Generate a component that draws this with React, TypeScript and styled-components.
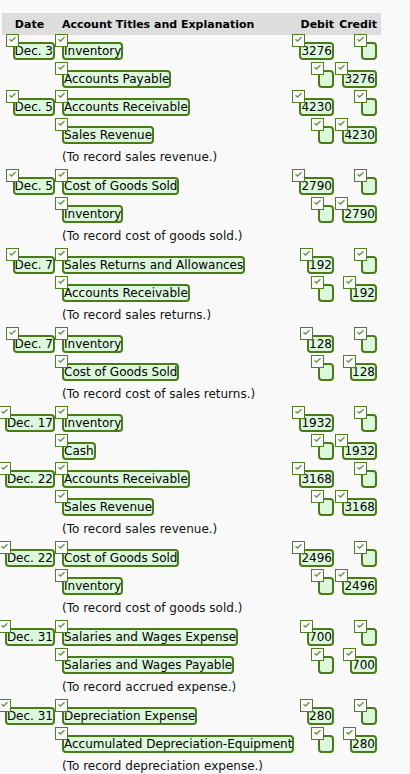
import React from "react";
import styled, { createGlobalStyle } from "styled-components";

const GlobalStyle = createGlobalStyle`
  body {
    margin: 0;
    background: #f9f9f9;
    font-family: "DejaVu Sans", Verdana, sans-serif;
    font-size: 12px;
    color: #000;
  }
`;

const Page = styled.div`
  padding: 13px 0 0 2px;
`;

const Table = styled.table`
  width: 379px;
  border-collapse: collapse;
  border-spacing: 0;
  table-layout: fixed;
`;

const Col = styled.col<{ $width: number }>`
  width: ${(p) => p.$width}px;
`;

const HeadCell = styled.th<{ $align: "left" | "center" | "right" }>`
  box-sizing: border-box;
  height: 22px;
  padding: 0 ${(p) => (p.$align === "right" ? "4px" : "0")} 0
    ${(p) => (p.$align === "left" ? "5px" : "0")};
  background: #dddddd;
  font-weight: bold;
  font-size: 11px;
  text-align: ${(p) => p.$align};
  white-space: nowrap;
`;

const EntryRow = styled.tr`
  height: 28px;
`;

const MemoRow = styled.tr`
  height: 23px;
`;

const Cell = styled.td<{ $align: "left" | "right" }>`
  box-sizing: border-box;
  padding: 7px ${(p) => (p.$align === "right" ? "4px" : "0")} 0
    ${(p) => (p.$align === "left" ? "5px" : "0")};
  vertical-align: top;
  text-align: ${(p) => p.$align};
  white-space: nowrap;
`;

const DateCell = styled(Cell)`
  padding-right: 2px;
`;

const MemoCell = styled.td`
  box-sizing: border-box;
  padding: 3px 0 0 5px;
  vertical-align: top;
  line-height: 15px;
  color: #111;
  white-space: nowrap;
`;

const Field = styled.span`
  position: relative;
  display: inline-block;
  min-width: 12px;
  height: 14px;
  line-height: 14px;
  border: 2px solid #4b7b16;
  border-radius: 4px;
  background: #dcf8dc;
  text-align: left;
  vertical-align: top;
`;

const Check = styled.span`
  position: absolute;
  left: -9px;
  top: -10px;
  width: 11px;
  height: 11px;
  border: 1px solid #4f7f1f;
  background: #fbfbfb;
  z-index: 1;
  svg {
    display: block;
  }
`;

function Answer({ value }: { value?: string }) {
  return (
    <Field>
      <Check>
        <svg width="11" height="11" viewBox="0 0 11 11">
          <polyline
            points="2.5,4.2 4.5,6 8.5,2.2"
            fill="none"
            stroke="#6b8f52"
            strokeWidth="1.3"
          />
        </svg>
      </Check>
      {value}
    </Field>
  );
}

interface Entry {
  date: string;
  lines: [string, string, string][];
  memo?: string;
}

const entries: Entry[] = [
  {
    date: "Dec. 3",
    lines: [
      ["Inventory", "3276", ""],
      ["Accounts Payable", "", "3276"],
    ],
  },
  {
    date: "Dec. 5",
    lines: [
      ["Accounts Receivable", "4230", ""],
      ["Sales Revenue", "", "4230"],
    ],
    memo: "(To record sales revenue.)",
  },
  {
    date: "Dec. 5",
    lines: [
      ["Cost of Goods Sold", "2790", ""],
      ["Inventory", "", "2790"],
    ],
    memo: "(To record cost of goods sold.)",
  },
  {
    date: "Dec. 7",
    lines: [
      ["Sales Returns and Allowances", "192", ""],
      ["Accounts Receivable", "", "192"],
    ],
    memo: "(To record sales returns.)",
  },
  {
    date: "Dec. 7",
    lines: [
      ["Inventory", "128", ""],
      ["Cost of Goods Sold", "", "128"],
    ],
    memo: "(To record cost of sales returns.)",
  },
  {
    date: "Dec. 17",
    lines: [
      ["Inventory", "1932", ""],
      ["Cash", "", "1932"],
    ],
  },
  {
    date: "Dec. 22",
    lines: [
      ["Accounts Receivable", "3168", ""],
      ["Sales Revenue", "", "3168"],
    ],
    memo: "(To record sales revenue.)",
  },
  {
    date: "Dec. 22",
    lines: [
      ["Cost of Goods Sold", "2496", ""],
      ["Inventory", "", "2496"],
    ],
    memo: "(To record cost of goods sold.)",
  },
  {
    date: "Dec. 31",
    lines: [
      ["Salaries and Wages Expense", "700", ""],
      ["Salaries and Wages Payable", "", "700"],
    ],
    memo: "(To record accrued expense.)",
  },
  {
    date: "Dec. 31",
    lines: [
      ["Depreciation Expense", "280", ""],
      ["Accumulated Depreciation-Equipment", "", "280"],
    ],
    memo: "(To record depreciation expense.)",
  },
];

export default function App() {
  return (
    <Page>
      <GlobalStyle />
      <Table>
        <colgroup>
          <Col $width={55} />
          <Col $width={239} />
          <Col $width={42} />
          <Col $width={43} />
        </colgroup>
        <thead>
          <tr>
            <HeadCell $align="center">Date</HeadCell>
            <HeadCell $align="left">Account Titles and Explanation</HeadCell>
            <HeadCell $align="right">Debit</HeadCell>
            <HeadCell $align="right">Credit</HeadCell>
          </tr>
        </thead>
        <tbody>
          {entries.map((entry, i) => (
            <React.Fragment key={i}>
              {entry.lines.map(([account, debit, credit], j) => (
                <EntryRow key={j}>
                  <DateCell $align="right">
                    {j === 0 && <Answer value={entry.date} />}
                  </DateCell>
                  <Cell $align="left">
                    <Answer value={account} />
                  </Cell>
                  <Cell $align="right">
                    <Answer value={debit} />
                  </Cell>
                  <Cell $align="right">
                    <Answer value={credit} />
                  </Cell>
                </EntryRow>
              ))}
              {entry.memo && (
                <MemoRow>
                  <td />
                  <MemoCell colSpan={3}>{entry.memo}</MemoCell>
                </MemoRow>
              )}
            </React.Fragment>
          ))}
        </tbody>
      </Table>
    </Page>
  );
}
